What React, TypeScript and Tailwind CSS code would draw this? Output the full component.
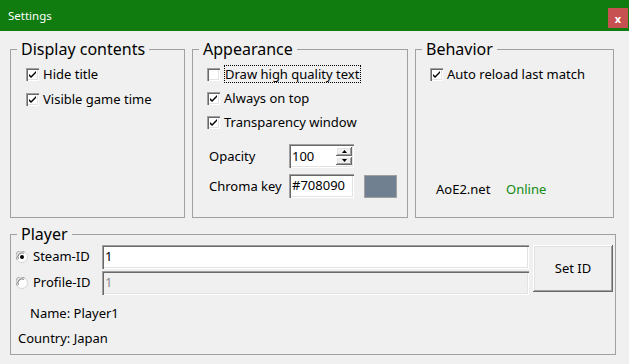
import React from "react";

const sunken =
  "shadow-[inset_1px_1px_0_#a0a0a0,inset_2px_2px_0_#696969,inset_-1px_-1px_0_#ffffff,inset_-2px_-2px_0_#e3e3e3]";
const raised =
  "shadow-[inset_-1px_-1px_0_#696969,inset_1px_1px_0_#ffffff,inset_-2px_-2px_0_#a0a0a0,inset_2px_2px_0_#e3e3e3]";

function Check({ checked }: { checked: boolean }) {
  return (
    <span className={`w-[13px] h-[13px] bg-white shrink-0 flex items-center justify-center ${sunken}`}>
      {checked && (
        <svg width="7" height="7" viewBox="0 0 7 7">
          <path d="M0 3 L0 5 L2 7 L7 2 L7 0 L2 5 Z" fill="#000" />
        </svg>
      )}
    </span>
  );
}

function Radio({ checked }: { checked: boolean }) {
  return (
    <svg width="12" height="12" viewBox="0 0 12 12" className="shrink-0">
      <circle cx="6" cy="6" r="5.5" fill="#ffffff" stroke="#d4d4d4" strokeWidth="1" />
      <path d="M1.2 8.6 A5.2 5.2 0 0 1 8.6 1.2" stroke="#9a9a9a" strokeWidth="1" fill="none" />
      <path d="M2.3 7.8 A4.1 4.1 0 0 1 7.8 2.3" stroke="#6a6a6a" strokeWidth="1" fill="none" />
      {checked && <circle cx="6" cy="6" r="2" fill="#000" />}
    </svg>
  );
}

function CheckRow({ checked, label, focus }: { checked: boolean; label: string; focus?: boolean }) {
  return (
    <div className="h-[20px] flex items-center gap-[4px]">
      <Check checked={checked} />
      {focus ? (
        <span className="border border-dotted border-black leading-[16px] pr-[1px]">{label}</span>
      ) : (
        <span className="leading-[16px]">{label}</span>
      )}
    </div>
  );
}

function Legend({ children }: { children: React.ReactNode }) {
  return <legend className="ml-[6px] px-[4px] text-[16px] leading-[18px]">{children}</legend>;
}

export default function App() {
  return (
    <div className="w-[629px] h-[364px] bg-[#f0f0f0] font-['Noto_Sans',sans-serif] text-[13px] text-black overflow-hidden flex flex-col">
      <div className="h-[31px] bg-[#107c10] flex justify-between pl-[8px] pr-[1px] shrink-0">
        <span className="text-white text-[11.5px] self-center">Settings</span>
        <div className="mt-[8px] w-[20px] h-[20px] bg-[#c75050] text-white text-[11px] font-bold flex items-center justify-center leading-none">
          x
        </div>
      </div>

      <div className="px-[10px] pt-[9px] flex flex-col">
        <div className="flex gap-[7px]">
          <fieldset className="w-[175px] h-[178px] border border-[#a0a0a0]">
            <Legend>Display contents</Legend>
            <div className="pl-[15px] pt-[6px] flex flex-col gap-[5px]">
              <CheckRow checked label="Hide title" />
              <CheckRow checked label="Visible game time" />
            </div>
          </fieldset>

          <fieldset className="w-[216px] h-[178px] border border-[#a0a0a0]">
            <Legend>Appearance</Legend>
            <div className="pl-[14px] pt-[6px] flex flex-col gap-[4px]">
              <CheckRow checked={false} label="Draw high quality text" focus />
              <CheckRow checked label="Always on top" />
              <CheckRow checked label="Transparency window" />
            </div>
            <div className="pl-[16px] mt-[12px] flex flex-col gap-[6px]">
              <div className="h-[24px] flex items-center">
                <span className="w-[80px] pt-[2px]">Opacity</span>
                <div className={`w-[65px] h-[24px] bg-white flex p-[2px] ${sunken}`}>
                  <span className="flex-1 pl-[1px] leading-[20px]">100</span>
                  <div className="w-[16px] flex flex-col gap-[1px] py-[1px]">
                    <div className={`flex-1 bg-[#f0f0f0] flex items-center justify-center ${raised}`}>
                      <svg width="5" height="3" viewBox="0 0 5 3">
                        <path d="M2.5 0 L5 3 L0 3 Z" fill="#000" />
                      </svg>
                    </div>
                    <div className={`flex-1 bg-[#f0f0f0] flex items-center justify-center ${raised}`}>
                      <svg width="5" height="3" viewBox="0 0 5 3">
                        <path d="M0 0 L5 0 L2.5 3 Z" fill="#000" />
                      </svg>
                    </div>
                  </div>
                </div>
              </div>
              <div className="h-[24px] flex items-center">
                <span className="w-[80px] pt-[1px]">Chroma key</span>
                <div className={`w-[65px] h-[24px] bg-white flex items-center pl-[3px] ${sunken}`}>#708090</div>
                <div className="ml-[10px] w-[33px] h-[23px] bg-[#708090] border border-[#a0a0a0]" />
              </div>
            </div>
          </fieldset>

          <fieldset className="w-[199px] h-[178px] border border-[#a0a0a0]">
            <Legend>Behavior</Legend>
            <div className="pl-[14px] pt-[6px]">
              <CheckRow checked label="Auto reload last match" />
            </div>
            <div className="pl-[20px] mt-[96px] h-[20px] flex items-center">
              <span className="w-[70px]">AoE2.net</span>
              <span className="text-[#108a10]">Online</span>
            </div>
          </fieldset>
        </div>

        <fieldset className="mt-[7px] w-[606px] h-[130px] border border-[#a0a0a0]">
          <Legend>Player</Legend>
          <div className="pl-[5px] pr-[2px] pt-[2px] flex">
            <div className="flex-1 flex flex-col">
              <div className="flex flex-col gap-[2px]">
                <div className="h-[24px] flex items-center">
                  <div className="w-[86px] flex items-center gap-[5px]">
                    <Radio checked />
                    <span>Steam-ID</span>
                  </div>
                  <div className={`flex-1 h-[24px] bg-white flex items-center pl-[3px] ${sunken}`}>1</div>
                </div>
                <div className="h-[24px] flex items-center">
                  <div className="w-[86px] flex items-center gap-[5px]">
                    <Radio checked={false} />
                    <span>Profile-ID</span>
                  </div>
                  <div className={`flex-1 h-[24px] bg-[#f0f0f0] text-[#8a8a8a] flex items-center pl-[3px] ${sunken}`}>1</div>
                </div>
              </div>
              <div className="mt-[9px] h-[20px] flex items-center pl-[14px]">Name: Player1</div>
              <div className="mt-[5px] h-[20px] flex items-center pl-[2px]">Country: Japan</div>
            </div>
            <div className={`ml-[4px] w-[80px] h-[47px] bg-[#f0f0f0] flex items-center justify-center ${raised}`}>
              Set ID
            </div>
          </div>
        </fieldset>
      </div>
    </div>
  );
}
